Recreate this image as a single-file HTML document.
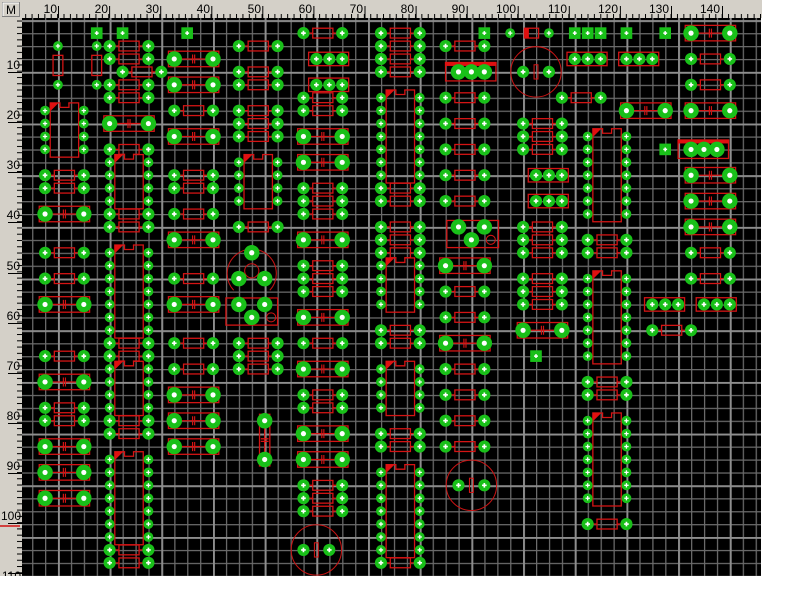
<!DOCTYPE html>
<html><head><meta charset="utf-8"><style>
html,body{margin:0;padding:0;background:#fff;width:800px;height:604px;overflow:hidden}
svg{display:block}
</style></head><body>
<svg width="800" height="604" viewBox="0 0 800 604" xmlns="http://www.w3.org/2000/svg" font-family="Liberation Sans, sans-serif">
<defs>
<pattern id="gmin" patternUnits="userSpaceOnUse" x="19.2" y="20.2" width="12.92" height="12.92"><path d="M0.6 0V12.92M0 0.6H12.92" stroke="#6c6c6c" stroke-width="1.3"/></pattern>
<pattern id="gmaj" patternUnits="userSpaceOnUse" x="57.96" y="20.2" width="51.68" height="51.68"><path d="M0.9 0V51.68M0 0.9H51.68" stroke="#8e8e8e" stroke-width="2"/></pattern>
<pattern id="tt" patternUnits="userSpaceOnUse" x="6" y="0" width="6.39" height="18"><path d="M0.5 14V18" stroke="#000" stroke-width="1"/></pattern>
<pattern id="tl" patternUnits="userSpaceOnUse" x="0" y="8" width="22" height="6.27"><path d="M17 0.5H22" stroke="#000" stroke-width="1"/></pattern>
<clipPath id="board"><rect x="22" y="18" width="739" height="558"/></clipPath>

<g id="p"><circle r=".38" fill="#19c019"/><path d="M-.17 0H.17M0-.17V.17" stroke="#fff" stroke-width=".1"/></g>
<g id="m"><circle r=".47" fill="#19c019"/><path d="M-.18 0H.18M0-.18V.18" stroke="#fff" stroke-width=".13"/></g>
<g id="P"><circle r=".6" fill="#19c019"/><circle r=".2" fill="#fff"/></g>
<g id="s"><rect x="-.45" y="-.45" width=".9" height=".9" fill="#19c019"/><path d="M-.15 0H.15M0-.15V.15" stroke="#fff" stroke-width=".12"/></g>
<g id="rb" fill="none" stroke="#d41414" stroke-width=".1"><rect x=".72" y="-.38" width="1.56" height=".76"/><path d="M.45 0H.72M2.28 0H2.55"/></g>
<g id="R"><use href="#rb"/><use href="#m"/><use href="#m" x="3"/></g>
<g id="RV"><g fill="none" stroke="#d41414" stroke-width=".1"><rect x="-.38" y=".72" width=".76" height="1.56"/></g><use href="#p"/><use href="#p" y="3"/></g>
<g id="C"><g fill="none" stroke="#d41414" stroke-width=".1"><rect x="-.45" y="-.6" width="3.9" height="1.2"/><path d="M.5 0H2.5"/><path d="M1.42-.35V.35M1.58-.35V.35" stroke-width=".09"/></g><use href="#P"/><use href="#P" x="3"/></g>
<g id="T3"><rect x="-.6" y="-.52" width="3.1" height="1.04" fill="none" stroke="#d41414" stroke-width=".1"/><use href="#m"/><use href="#m" x="1"/><use href="#m" x="2"/></g>
<g id="T3b"><rect x="-1" y="-.7" width="3.9" height="1.4" fill="none" stroke="#d41414" stroke-width=".1"/><rect x="-1.05" y="-.78" width="4" height=".32" fill="#e01010"/><use href="#P"/><use href="#P" x="1"/><use href="#P" x="2"/></g>
<g id="c3"><use href="#p"/><use href="#p" y="1"/><use href="#p" y="2"/></g>
<g id="c4"><use href="#c3"/><use href="#p" y="3"/></g>
<g id="c7"><use href="#c4"/><use href="#c3" y="4"/></g>
<g id="ih"><path d="M.4-.6h.65L.4.05z" fill="#e01010"/><path d="M1.2-.6H1.8" stroke="#000" stroke-width=".16"/><path d="M1.15-.6V-.25H1.85V-.6" fill="none" stroke="#d41414" stroke-width=".1"/></g>
<g id="ic4"><rect x=".4" y="-.6" width="2.2" height="4.2" fill="none" stroke="#d41414" stroke-width=".1"/><use href="#ih"/><use href="#c4"/><use href="#c4" x="3"/></g>
<g id="ic7"><rect x=".4" y="-.6" width="2.2" height="7.2" fill="none" stroke="#d41414" stroke-width=".1"/><use href="#ih"/><use href="#c7"/><use href="#c7" x="3"/></g>
<g id="circ"><circle r="1.95" fill="none" stroke="#c81414" stroke-width=".08"/><rect x="-.15" y="-.55" width=".3" height="1.1" fill="none" stroke="#d41414" stroke-width=".08"/><use href="#m" x="-1"/><use href="#m" x="1"/></g>
</defs>

<!-- board -->
<rect x="22" y="18" width="739" height="558" fill="#000"/>
<g clip-path="url(#board)">
<rect x="22" y="18" width="739" height="558" fill="url(#gmin)"/>
<rect x="22" y="18" width="739" height="558" fill="url(#gmaj)"/>
</g>

<!-- rulers -->
<rect x="0" y="0" width="762" height="18" fill="#d4d0c8"/>
<rect x="0" y="0" width="22" height="576" fill="#d4d0c8"/>
<rect x="22" y="0" width="740" height="18" fill="url(#tt)"/>
<rect x="0" y="18" width="22" height="558" fill="url(#tl)"/>
<g stroke="#000" stroke-width="1">
<path d="M58.5 6V18M109.6 6V18M160.7 6V18M211.8 6V18M262.8 6V18M313.9 6V18M365 6V18M416.1 6V18M467.2 6V18M518.2 6V18M569.3 6V18M620.4 6V18M671.5 6V18M722.5 6V18"/>
<path d="M8 72.5H22M8 122.5H22M8 172.5H22M8 222.5H22M8 273.5H22M8 323.5H22M8 373.5H22M8 423.5H22M8 473.5H22M8 523.5H22M8 573.5H22"/>
</g>
<g font-size="12" fill="#000" text-anchor="end">
<text x="57" y="13">10</text><text x="108" y="13">20</text><text x="159" y="13">30</text><text x="210" y="13">40</text><text x="261" y="13">50</text><text x="312" y="13">60</text><text x="363" y="13">70</text><text x="414" y="13">80</text><text x="465" y="13">90</text><text x="516" y="13">100</text><text x="567" y="13">110</text><text x="618" y="13">120</text><text x="669" y="13">130</text><text x="720" y="13">140</text>
<text x="20" y="69">10</text><text x="20" y="119">20</text><text x="20" y="169">30</text><text x="20" y="219">40</text><text x="20" y="270">50</text><text x="20" y="320">60</text><text x="20" y="370">70</text><text x="20" y="420">80</text><text x="20" y="470">90</text><text x="21" y="520">100</text><text x="21" y="580">110</text>
</g>
<text x="762" y="13" font-size="12" fill="#000">15</text>
<rect x="762" y="0" width="38" height="604" fill="#fff"/>
<rect x="0" y="576" width="800" height="28" fill="#fff"/>
<path d="M0 526H20" stroke="#d01010" stroke-width="1.5"/>
<rect x="2.5" y="2.5" width="17" height="14" fill="#d4d0c8" stroke="#808080"/>
<path d="M3 16V3H19" stroke="#fff" fill="none"/>
<text x="11" y="14" font-size="12" text-anchor="middle" fill="#000">M</text>

<g clip-path="url(#board)"><g transform="translate(19.2 20.2) scale(12.92)">
<!-- Group A -->
<use href="#RV" x="3" y="2"/><use href="#RV" x="6" y="2"/>
<use href="#s" x="6" y="1"/><use href="#s" x="8" y="1"/><use href="#s" x="13" y="1"/>
<use href="#R" x="7" y="2"/><use href="#R" x="7" y="3"/><use href="#R" x="8" y="4"/><use href="#R" x="7" y="5"/><use href="#R" x="7" y="6"/>
<use href="#C" x="7" y="8"/>
<use href="#ic4" x="2" y="7"/>
<use href="#R" x="2" y="12"/><use href="#R" x="2" y="13"/><use href="#C" x="2" y="15"/><use href="#R" x="2" y="18"/><use href="#R" x="2" y="20"/><use href="#C" x="2" y="22"/><use href="#R" x="2" y="26"/><use href="#C" x="2" y="28"/><use href="#R" x="2" y="30"/><use href="#R" x="2" y="31"/><use href="#C" x="2" y="33"/><use href="#C" x="2" y="35"/><use href="#C" x="2" y="37"/>
<!-- Group B -->
<use href="#R" x="7" y="10"/><use href="#ic4" x="7" y="11"/><use href="#R" x="7" y="15"/><use href="#R" x="7" y="16"/>
<use href="#ic7" x="7" y="18"/><use href="#R" x="7" y="25"/><use href="#R" x="7" y="26"/>
<use href="#ic4" x="7" y="27"/><use href="#R" x="7" y="31"/><use href="#R" x="7" y="32"/>
<use href="#ic7" x="7" y="34"/><use href="#R" x="7" y="41"/><use href="#R" x="7" y="42"/>
<!-- Group C -->
<use href="#C" x="12" y="3"/><use href="#C" x="12" y="5"/><use href="#R" x="12" y="7"/><use href="#C" x="12" y="9"/><use href="#R" x="12" y="12"/><use href="#R" x="12" y="13"/><use href="#R" x="12" y="15"/><use href="#C" x="12" y="17"/><use href="#R" x="12" y="20"/><use href="#C" x="12" y="22"/><use href="#R" x="12" y="25"/><use href="#R" x="12" y="27"/><use href="#C" x="12" y="29"/><use href="#C" x="12" y="31"/><use href="#C" x="12" y="33"/>
<!-- Group D -->
<use href="#R" x="17" y="2"/><use href="#R" x="17" y="4"/><use href="#R" x="17" y="5"/><use href="#R" x="17" y="7"/><use href="#R" x="17" y="8"/><use href="#R" x="17" y="9"/>
<use href="#ic4" x="17" y="11"/><use href="#R" x="17" y="16"/>
<g fill="none" stroke="#c81414" stroke-width=".08"><path d="M16.6 20.9A1.9 1.9 0 1 1 19.4 20.9"/><circle cx="18" cy="19.4" r=".55"/></g>
<use href="#P" x="18" y="18"/><use href="#P" x="17" y="20"/><use href="#P" x="19" y="20"/>
<rect x="16" y="21.5" width="4" height="2.1" fill="none" stroke="#d41414" stroke-width=".1"/>
<circle cx="19.5" cy="23" r=".35" fill="none" stroke="#d41414" stroke-width=".08"/>
<use href="#P" x="17" y="22"/><use href="#P" x="19" y="22"/><use href="#P" x="18" y="23"/>
<use href="#R" x="17" y="25"/><use href="#R" x="17" y="26"/><use href="#R" x="17" y="27"/>
<g fill="none" stroke="#d41414" stroke-width=".1"><rect x="18.6" y="30.5" width=".8" height="4"/><path d="M19 31V34M18.7 32.4H19.3M18.7 32.6H19.3"/></g>
<use href="#P" x="19" y="31"/><use href="#P" x="19" y="34"/>
<!-- Group E -->
<use href="#R" x="22" y="1"/><use href="#T3" x="23" y="3"/><use href="#T3" x="23" y="5"/>
<use href="#R" x="22" y="6"/><use href="#R" x="22" y="7"/><use href="#C" x="22" y="9"/><use href="#C" x="22" y="11"/>
<use href="#R" x="22" y="13"/><use href="#R" x="22" y="14"/><use href="#R" x="22" y="15"/><use href="#C" x="22" y="17"/>
<use href="#R" x="22" y="19"/><use href="#R" x="22" y="20"/><use href="#R" x="22" y="21"/><use href="#C" x="22" y="23"/>
<use href="#R" x="22" y="25"/><use href="#C" x="22" y="27"/><use href="#R" x="22" y="29"/><use href="#R" x="22" y="30"/><use href="#C" x="22" y="32"/><use href="#C" x="22" y="34"/>
<use href="#R" x="22" y="36"/><use href="#R" x="22" y="37"/><use href="#R" x="22" y="38"/>
<use href="#circ" x="23" y="41"/>
<!-- Group F -->
<use href="#R" x="28" y="1"/><use href="#R" x="28" y="2"/><use href="#R" x="28" y="3"/><use href="#R" x="28" y="4"/>
<use href="#ic7" x="28" y="6"/><use href="#R" x="28" y="13"/><use href="#R" x="28" y="14"/>
<use href="#R" x="28" y="16"/><use href="#R" x="28" y="17"/><use href="#R" x="28" y="18"/>
<use href="#ic4" x="28" y="19"/><use href="#R" x="28" y="24"/><use href="#R" x="28" y="25"/>
<use href="#ic4" x="28" y="27"/><use href="#R" x="28" y="32"/><use href="#R" x="28" y="33"/>
<use href="#ic7" x="28" y="35"/><use href="#R" x="28" y="42"/>
<!-- Group G -->
<use href="#s" x="36" y="1"/><use href="#R" x="33" y="2"/><use href="#T3b" x="34" y="4"/>
<use href="#R" x="33" y="6"/><use href="#R" x="33" y="8"/><use href="#R" x="33" y="10"/><use href="#R" x="33" y="12"/><use href="#R" x="33" y="14"/>
<rect x="33.1" y="15.5" width="4" height="2.1" fill="none" stroke="#d41414" stroke-width=".1"/>
<circle cx="36.5" cy="17" r=".35" fill="none" stroke="#d41414" stroke-width=".08"/>
<use href="#P" x="34" y="16"/><use href="#P" x="36" y="16"/><use href="#P" x="35" y="17"/>
<use href="#C" x="33" y="19"/><use href="#R" x="33" y="21"/><use href="#R" x="33" y="23"/><use href="#C" x="33" y="25"/><use href="#R" x="33" y="27"/><use href="#R" x="33" y="29"/><use href="#R" x="33" y="31"/><use href="#R" x="33" y="33"/>
<use href="#circ" x="35" y="36"/>
<!-- Group H -->
<use href="#p" x="38" y="1"/>
<rect x="39.1" y="-.38" width="1.1" height=".76" fill="none" stroke="#d41414" stroke-width=".1" transform="translate(0 1)"/>
<rect x="39.1" y=".62" width=".35" height=".76" fill="#e01010"/>
<use href="#p" x="41" y="1"/>
<use href="#s" x="43" y="1"/><use href="#s" x="44" y="1"/><use href="#s" x="45" y="1"/><use href="#s" x="47" y="1"/><use href="#s" x="50" y="1"/>
<use href="#C" x="52" y="1"/>
<use href="#T3" x="43" y="3"/><use href="#T3" x="47" y="3"/>
<use href="#circ" x="40" y="4"/>
<use href="#R" x="52" y="3"/><use href="#R" x="52" y="5"/><use href="#R" x="42" y="6"/>
<use href="#C" x="47" y="7"/><use href="#C" x="52" y="7"/>
<use href="#R" x="39" y="8"/><use href="#R" x="39" y="9"/><use href="#R" x="39" y="10"/>
<use href="#ic7" x="44" y="9"/>
<use href="#s" x="50" y="10"/><use href="#T3b" x="52" y="10"/>
<use href="#C" x="52" y="12"/><use href="#C" x="52" y="14"/><use href="#C" x="52" y="16"/>
<use href="#T3" x="40" y="12"/><use href="#T3" x="40" y="14"/>
<use href="#R" x="39" y="16"/><use href="#R" x="39" y="17"/><use href="#R" x="39" y="18"/>
<use href="#R" x="44" y="17"/><use href="#R" x="44" y="18"/>
<use href="#R" x="52" y="18"/><use href="#R" x="52" y="20"/>
<use href="#R" x="39" y="20"/><use href="#R" x="39" y="21"/><use href="#R" x="39" y="22"/>
<use href="#ic7" x="44" y="20"/>
<use href="#T3" x="49" y="22"/><use href="#T3" x="53" y="22"/>
<use href="#C" x="39" y="24"/><use href="#s" x="40" y="26"/><use href="#R" x="49" y="24"/>
<use href="#R" x="44" y="28"/><use href="#R" x="44" y="29"/>
<use href="#ic7" x="44" y="31"/><use href="#R" x="44" y="39"/>
</g></g>
</svg>
</body></html>
